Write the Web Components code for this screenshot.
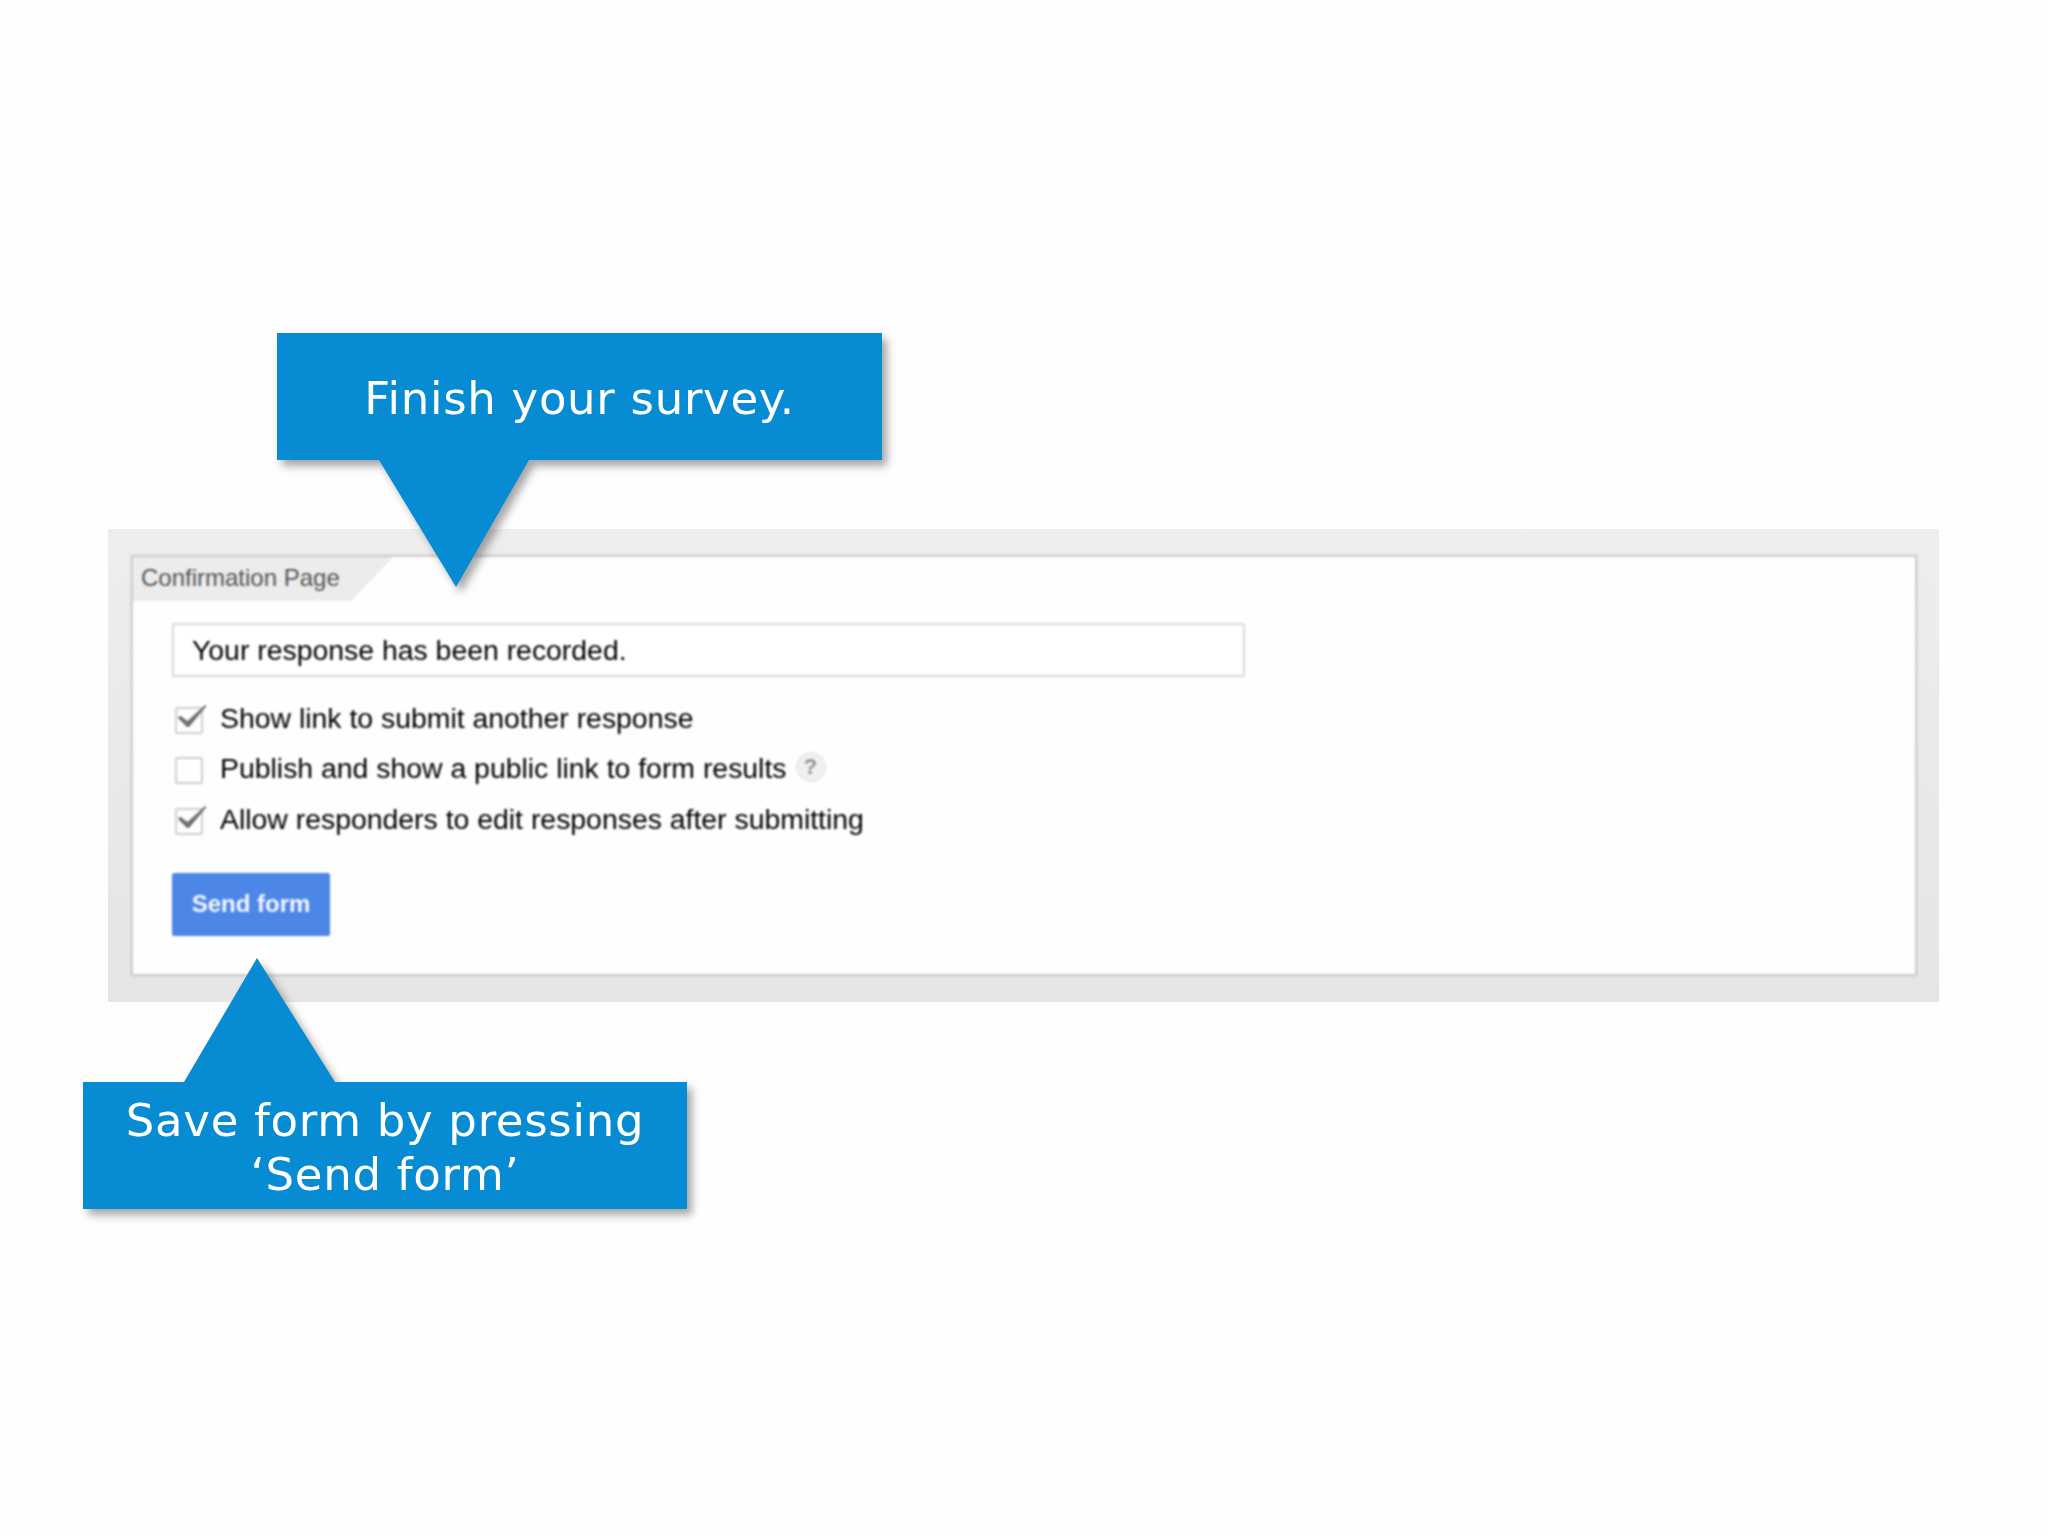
<!DOCTYPE html>
<html><head><meta charset="utf-8">
<style>
html,body{margin:0;padding:0;background:#fefefe;}
</style></head><body>
<template id="t-slide"><style>
:host{display:block;position:relative;width:2048px;height:1536px;box-sizing:border-box;padding:529px 109px 0 108px;background:#fefefe;overflow:hidden;font-family:"Liberation Sans",Arial,sans-serif}
</style><slot></slot></template>

<template id="t-panel"><style>
:host{display:block;height:473px;box-sizing:border-box;padding:26px 22px 26px 23px;background:linear-gradient(#eeeeef,#e5e5e6)}
.card{height:100%;box-sizing:border-box;background:#fefefe;border:2px solid #cdcdce;box-shadow:0 0 2px #ccc;filter:blur(.8px);display:flex;flex-direction:column;align-items:flex-start}
.body{display:flex;flex-direction:column;align-items:flex-start;padding:22px 0 0 39px;width:100%;box-sizing:border-box}
</style><div class="card"><slot name="tab"></slot><div class="body"><slot></slot></div></div></template>

<template id="t-tab"><style>
:host{display:flex;align-items:center;width:260px;height:44px;box-sizing:border-box;padding:0 0 3px 8px;background:#ececec;color:#555;font-size:24px;white-space:nowrap;clip-path:polygon(0 0,100% 0,218px 100%,0 100%)}
</style><slot></slot></template>

<template id="t-input"><style>
:host{display:flex;align-items:center;width:1073px;height:54px;box-sizing:border-box;padding:0 0 0 18px;background:#fff;border:2px solid #d8d8d8;border-radius:2px;color:#000;font-size:28.4px;white-space:nowrap;margin-bottom:16px}
</style><slot></slot></template>

<template id="t-check"><style>
:host{display:flex;align-items:center;height:50.5px;color:#000;font-size:28.4px;white-space:nowrap}
.box{flex:none;position:relative;width:28px;height:27px;box-sizing:border-box;border:2.5px solid #cfcfcf;border-radius:2px;background:#fefefe;margin:4px 17px 0 3px}
svg{position:absolute;left:-2.5px;top:-2.5px;display:none;overflow:visible}
:host([checked]) svg{display:block}
</style><span class="box"><svg width="34" height="30" viewBox="0 0 34 30"><path d="M3 12 L5 9.500 L12.500 15 L30 -1 L31.500 0 L14 21 L12 21 Z" fill="#6f6f6f"/></svg></span><slot></slot></template>

<template id="t-help"><style>
:host{display:inline-flex;align-items:center;justify-content:center;width:30px;height:30px;box-sizing:border-box;margin-left:9px;margin-top:-4px;border-radius:50%;background:#f0f0f0;border:1.500px solid #e2e2e2;color:#929292;font-size:22px;font-weight:bold}
</style><slot></slot></template>

<template id="t-button"><style>
:host{display:flex;align-items:center;justify-content:center;width:158px;height:63px;box-sizing:border-box;margin-top:28px;background:#4c87e8;border:1px solid #4a82df;border-radius:2px;color:#f6f8fe;font-size:24px;font-weight:bold;white-space:nowrap}
</style><slot></slot></template>

<template id="t-callout"><style>
:host{position:absolute;left:var(--x);top:var(--y);width:var(--w);height:var(--h);display:block;filter:drop-shadow(5px 6px 4px rgba(60,60,60,.45));font-family:"DejaVu Sans",Verdana,sans-serif;z-index:2}
.shape{position:absolute;inset:0;background:#078bd2;clip-path:var(--clip)}
.text{position:absolute;left:0;right:0;top:calc(var(--tt) + 2.5px);height:var(--th);display:flex;align-items:center;justify-content:center;text-align:center;color:#fff;font-size:45px;line-height:54px;letter-spacing:.7px}
</style><div class="shape"></div><div class="text"><slot></slot></div></template>

<script>
for (const [name,tpl] of [['x-slide','t-slide'],['x-panel','t-panel'],['x-tab','t-tab'],['x-input','t-input'],['x-check','t-check'],['x-help','t-help'],['x-button','t-button'],['x-callout','t-callout']]) {
  customElements.define(name, class extends HTMLElement {
    constructor(){super();this.attachShadow({mode:'open'}).appendChild(document.getElementById(tpl).content.cloneNode(true));}
  });
}
</script>

<x-slide>
  <x-panel>
    <x-tab slot="tab">Confirmation Page</x-tab>
    <x-input>Your response has been recorded.</x-input>
    <x-check checked>Show link to submit another response</x-check>
    <x-check>Publish and show a public link to form results<x-help>?</x-help></x-check>
    <x-check checked>Allow responders to edit responses after submitting</x-check>
    <x-button>Send form</x-button>
  </x-panel>
  <x-callout style="--x:277px;--y:333px;--w:605px;--h:254px;--tt:0px;--th:127px;--clip:polygon(0 0,100% 0,100% 127px,252px 127px,179px 100%,102px 127px,0 127px)">Finish your survey.</x-callout>
  <x-callout style="--x:83px;--y:958px;--w:604px;--h:251px;--tt:124px;--th:127px;--clip:polygon(174px 0,252px 124px,100% 124px,100% 100%,0 100%,0 124px,101px 124px)">Save form by pressing<br>‘Send form’</x-callout>
</x-slide>
</body></html>
